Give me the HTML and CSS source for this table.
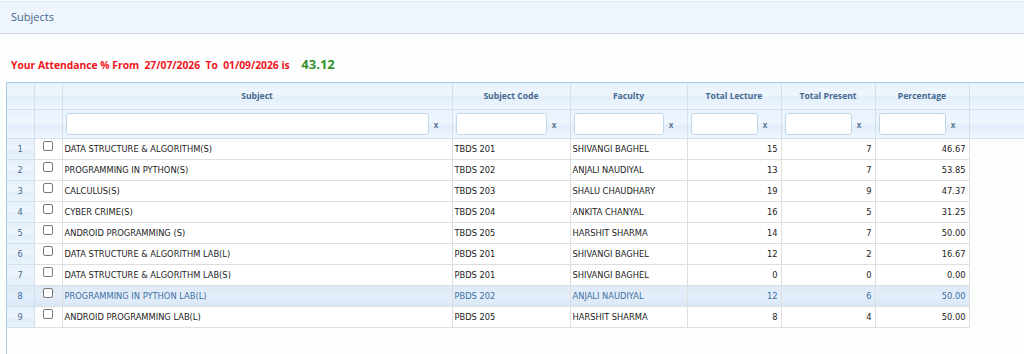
FILE: index.html
```html
<!DOCTYPE html>
<html>
<head>
<meta charset="utf-8">
<link rel="stylesheet" href="styles.css">
</head>
<body>
<div class="panel-head">Subjects</div>
<div class="att">Your Attendance % From&nbsp; 27/07/2026&nbsp; To&nbsp; 01/09/2026 is <span class="pct">43.12</span></div>
<div class="grid">
<table class="gt">
<colgroup>
<col class="c-rn"><col class="c-cb"><col class="c-sub"><col class="c-code"><col class="c-fac"><col class="c-num"><col class="c-num"><col class="c-num"><col class="c-rest">
</colgroup>
<thead>
<tr class="hrow">
<th></th><th></th><th>Subject</th><th>Subject Code</th><th>Faculty</th><th>Total Lecture</th><th>Total Present</th><th>Percentage</th><th class="rest"></th>
</tr>
<tr class="frow">
<th></th><th></th>
<th><div class="flt"><span class="inp"></span><span class="x">x</span></div></th>
<th><div class="flt"><span class="inp"></span><span class="x">x</span></div></th>
<th><div class="flt"><span class="inp"></span><span class="x">x</span></div></th>
<th><div class="flt"><span class="inp"></span><span class="x">x</span></div></th>
<th><div class="flt"><span class="inp"></span><span class="x">x</span></div></th>
<th><div class="flt"><span class="inp"></span><span class="x">x</span></div></th>
<th class="rest"></th>
</tr>
</thead>
<tbody>
<tr><td class="rn">1</td><td class="cb"><span class="box"></span></td><td>DATA STRUCTURE &amp; ALGORITHM(S)</td><td>TBDS 201</td><td>SHIVANGI BAGHEL</td><td class="r">15</td><td class="r">7</td><td class="r">46.67</td><td class="rest"></td></tr>
<tr><td class="rn">2</td><td class="cb"><span class="box"></span></td><td>PROGRAMMING IN PYTHON(S)</td><td>TBDS 202</td><td>ANJALI NAUDIYAL</td><td class="r">13</td><td class="r">7</td><td class="r">53.85</td><td class="rest"></td></tr>
<tr><td class="rn">3</td><td class="cb"><span class="box"></span></td><td>CALCULUS(S)</td><td>TBDS 203</td><td>SHALU CHAUDHARY</td><td class="r">19</td><td class="r">9</td><td class="r">47.37</td><td class="rest"></td></tr>
<tr><td class="rn">4</td><td class="cb"><span class="box"></span></td><td>CYBER CRIME(S)</td><td>TBDS 204</td><td>ANKITA CHANYAL</td><td class="r">16</td><td class="r">5</td><td class="r">31.25</td><td class="rest"></td></tr>
<tr><td class="rn">5</td><td class="cb"><span class="box"></span></td><td>ANDROID PROGRAMMING (S)</td><td>TBDS 205</td><td>HARSHIT SHARMA</td><td class="r">14</td><td class="r">7</td><td class="r">50.00</td><td class="rest"></td></tr>
<tr><td class="rn">6</td><td class="cb"><span class="box"></span></td><td>DATA STRUCTURE &amp; ALGORITHM LAB(L)</td><td>PBDS 201</td><td>SHIVANGI BAGHEL</td><td class="r">12</td><td class="r">2</td><td class="r">16.67</td><td class="rest"></td></tr>
<tr><td class="rn">7</td><td class="cb"><span class="box"></span></td><td>DATA STRUCTURE &amp; ALGORITHM LAB(S)</td><td>PBDS 201</td><td>SHIVANGI BAGHEL</td><td class="r">0</td><td class="r">0</td><td class="r">0.00</td><td class="rest"></td></tr>
<tr class="hover"><td class="rn">8</td><td class="cb"><span class="box"></span></td><td>PROGRAMMING IN PYTHON LAB(L)</td><td>PBDS 202</td><td>ANJALI NAUDIYAL</td><td class="r">12</td><td class="r">6</td><td class="r">50.00</td><td class="rest"></td></tr>
<tr><td class="rn">9</td><td class="cb"><span class="box"></span></td><td>ANDROID PROGRAMMING LAB(L)</td><td>PBDS 205</td><td>HARSHIT SHARMA</td><td class="r">8</td><td class="r">4</td><td class="r">50.00</td><td class="rest"></td></tr>
</tbody>
</table>
</div>
</body>
</html>
```

FILE: styles.css
```css
html, body {
  margin: 0;
  padding: 0;
  background: #fdfefe;
  overflow: hidden;
  height: 354px;
}
body {
  font-family: "Open Sans", "DejaVu Sans", sans-serif;
}
.panel-head {
  margin-top: 1px;
  height: 31px;
  line-height: 30px;
  padding-left: 11px;
  background: #eef5fc;
  border-top: 1px solid #dfe6ee;
  border-bottom: 1px solid #cfd8e2;
  font-size: 11px;
  color: #44678c;
}
.att {
  padding: 21px 0 0 11px;
  height: 27px;
  font-size: 10.3px;
  font-weight: bold;
  color: #f0141c;
}
.att .pct {
  font-size: 13px;
  color: #33922e;
  margin-left: 9px;
}
.grid {
  margin-left: 6px;
  width: 1040px;
  height: 272px;
  border-left: 1px solid #a9cbe6;
  border-top: 1px solid #a9cbe6;
  background: #fcfdfd;
}
.gt {
  border-collapse: collapse;
  table-layout: fixed;
  width: 1040px;
}
.c-rn { width: 27px; }
.c-cb { width: 28px; }
.c-sub { width: 390px; }
.c-code { width: 118px; }
.c-fac { width: 117px; }
.c-num { width: 94px; }
.c-rest { width: 78px; }
.gt th {
  background: linear-gradient(#e8f2fc 0%, #eef6fd 45%, #e2eefa 55%, #f0f7fe 100%);
  border-right: 1px solid #d3e0ec;
  border-bottom: 1px solid #d3e0ec;
  padding: 0;
  font-size: 8.6px;
  font-weight: bold;
  color: #46698f;
  text-align: center;
}
.gt th.rest { border-right: none; }
.hrow th { height: 26px; }
.frow th { height: 28px; }
.flt {
  display: flex;
  align-items: center;
  padding: 0 13px 0 3px;
  gap: 5px;
}
.inp {
  flex: 1;
  height: 20px;
  background: #fff;
  border: 1px solid #c3d7ea;
  border-radius: 3px;
}
.x {
  font-size: 8px;
  color: #5a7896;
  width: 5px;
}
.gt tbody tr { height: 21px; }
.gt td {
  height: 19px;
  line-height: 19px;
  padding: 1px 2px 0;
  border-right: 1px solid #dedede;
  border-bottom: 1px solid #dedede;
  font-family: "DejaVu Sans", Verdana, sans-serif;
  font-size: 8.3px;
  color: #222;
  background: #fff;
  white-space: nowrap;
  overflow: hidden;
  vertical-align: middle;
}
.gt td.r { text-align: right; padding-right: 3px; }
.gt td.rn {
  background: linear-gradient(#e4eff9 0%, #eef6fd 45%, #e2eefa 55%, #eaf3fc 100%);
  border-right: 1px solid #d3e0ec;
  border-bottom: 1px solid #d3e0ec;
  text-align: center;
  color: #4b6d8e;
}
.gt td.cb {
  text-align: center;
}
.box {
  display: block;
  margin: -7px auto 0;
  width: 8px;
  height: 8px;
  border: 1px solid #777;
  border-radius: 2px;
  background: #fff;
}
.gt td.rest {
  background: transparent;
  border: none;
}
.gt tr.hover td {
  background: linear-gradient(#dfeaf7 0%, #e4eefa 50%, #d9e7f6 100%);
  color: #3a6fa3;
}
.gt tr.hover td.rest { background: transparent; }
```
